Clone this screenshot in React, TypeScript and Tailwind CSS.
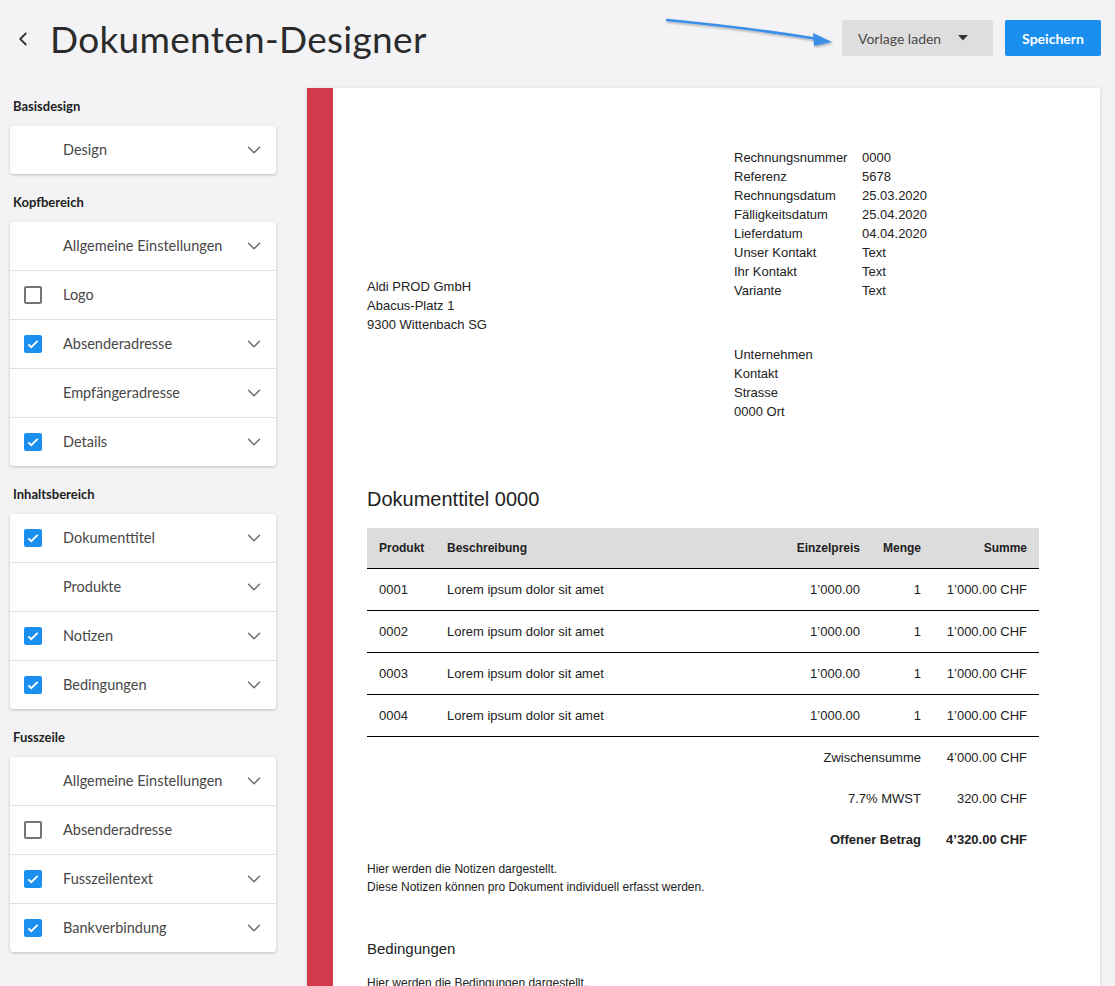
import React from "react";
import { ChevronDown, ChevronLeft } from "lucide-react";

type Row = { label: string; check?: boolean | null; chevron?: boolean };

const sections: { title: string; rows: Row[] }[] = [
  { title: "Basisdesign", rows: [{ label: "Design", check: null, chevron: true }] },
  {
    title: "Kopfbereich",
    rows: [
      { label: "Allgemeine Einstellungen", check: null, chevron: true },
      { label: "Logo", check: false, chevron: false },
      { label: "Absenderadresse", check: true, chevron: true },
      { label: "Empfängeradresse", check: null, chevron: true },
      { label: "Details", check: true, chevron: true },
    ],
  },
  {
    title: "Inhaltsbereich",
    rows: [
      { label: "Dokumenttitel", check: true, chevron: true },
      { label: "Produkte", check: null, chevron: true },
      { label: "Notizen", check: true, chevron: true },
      { label: "Bedingungen", check: true, chevron: true },
    ],
  },
  {
    title: "Fusszeile",
    rows: [
      { label: "Allgemeine Einstellungen", check: null, chevron: true },
      { label: "Absenderadresse", check: false, chevron: false },
      { label: "Fusszeilentext", check: true, chevron: true },
      { label: "Bankverbindung", check: true, chevron: true },
    ],
  },
];

const details = [
  ["Rechnungsnummer", "0000"],
  ["Referenz", "5678"],
  ["Rechnungsdatum", "25.03.2020"],
  ["Fälligkeitsdatum", "25.04.2020"],
  ["Lieferdatum", "04.04.2020"],
  ["Unser Kontakt", "Text"],
  ["Ihr Kontakt", "Text"],
  ["Variante", "Text"],
];

const products = ["0001", "0002", "0003", "0004"];

const Checkbox = ({ checked }: { checked: boolean }) =>
  checked ? (
    <div className="w-[18px] h-[18px] rounded-[2px] bg-[#1a8ff0] flex items-center justify-center">
      <svg width="14" height="14" viewBox="0 0 24 24" fill="none" stroke="white" strokeWidth="3.2">
        <path d="M4 12.5l5 5L20 6.5" />
      </svg>
    </div>
  ) : (
    <div className="w-[18px] h-[18px] rounded-[2px] border-2 border-[#747474] bg-white" />
  );

const SidebarCard = ({ rows }: { rows: Row[] }) => (
  <div className="bg-white rounded-[3px] shadow-[0_1px_3px_rgba(0,0,0,0.22)] divide-y divide-[#e0e0e0]">
    {rows.map((r, i) => (
      <div key={i} className="box-content h-[48px] flex items-center pl-[14px] pr-[11px]">
        <div className="w-[39px] shrink-0">{r.check !== null && r.check !== undefined && <Checkbox checked={r.check} />}</div>
        <span className="flex-1 text-[14.5px] text-[#474747]">{r.label}</span>
        {r.chevron && <ChevronDown size={22} strokeWidth={1.6} className="text-[#6b6b6b]" />}
      </div>
    ))}
  </div>
);

export default function App() {
  return (
    <div
      className="relative w-[1115px] h-[986px] overflow-hidden bg-[#f3f3f5]"
      style={{ fontFamily: "Lato, 'Noto Sans', sans-serif" }}
    >
      {/* header */}
      <div className="h-[78px] flex items-center pl-[12px] pr-[14px] pb-[2px]">
        <ChevronLeft size={22} strokeWidth={2} className="text-[#333] mt-[2px]" />
        <h1 className="ml-[16px] text-[37px] text-[#2b2b2b] tracking-[0.3px] leading-none">Dokumenten-Designer</h1>
        <div className="flex-1" />
        <button className="h-[36px] w-[151px] bg-[#dedede] rounded-[2px] flex items-center pl-[16px] text-[14px] text-[#4a4a4a]">
          Vorlage laden
          <svg className="ml-[17px]" width="10" height="6" viewBox="0 0 10 6">
            <path d="M0 0h10L5 5.5z" fill="#333" />
          </svg>
        </button>
        <button className="ml-[12px] h-[36px] w-[96px] bg-[#1a8ff0] rounded-[2px] text-white text-[14px] font-bold">
          Speichern
        </button>
      </div>

      {/* annotation arrow */}
      <svg className="absolute left-[660px] top-[12px]" width="180" height="40" viewBox="0 0 180 40">
        <defs>
          <filter id="sh" x="-10%" y="-50%" width="120%" height="200%">
            <feDropShadow dx="1" dy="1.5" stdDeviation="1" floodColor="#000" floodOpacity="0.3" />
          </filter>
        </defs>
        <g filter="url(#sh)">
          <path d="M7 8 Q 90 16 158 27" stroke="#3b8fe8" strokeWidth="2.5" fill="none" strokeLinecap="round" />
          <path d="M172 30 L153 21 L154 34 Z" fill="#3b8fe8" />
        </g>
      </svg>

      <div className="flex pl-[10px] pr-[15px]">
        {/* sidebar */}
        <div className="w-[266px] shrink-0">
          {sections.map((s) => (
            <div key={s.title}>
              <div className="pt-[20px] pb-[12px] pl-[3px] text-[13px] leading-[16px] font-bold text-[#222]">{s.title}</div>
              <SidebarCard rows={s.rows} />
            </div>
          ))}
        </div>

        {/* document */}
        <div
          className="ml-[31px] mt-[10px] flex-1 flex bg-white shadow-[0_1px_4px_rgba(0,0,0,0.15)] text-[#222]"
          style={{ fontFamily: "'Liberation Sans', Arial, sans-serif" }}
        >
          <div className="w-[26px] bg-[#d13a4b] shrink-0" />
          <div className="flex-1 pl-[34px] pr-[61px] pt-[60px]">
            <div className="flex text-[13px] leading-[19px]">
              <div className="w-[367px] pt-[129px]">
                <div>Aldi PROD GmbH</div>
                <div>Abacus-Platz 1</div>
                <div>9300 Wittenbach SG</div>
              </div>
              <div>
                {details.map(([k, v]) => (
                  <div key={k} className="flex">
                    <span className="w-[128px]">{k}</span>
                    <span>{v}</span>
                  </div>
                ))}
                <div className="mt-[45px]">
                  <div>Unternehmen</div>
                  <div>Kontakt</div>
                  <div>Strasse</div>
                  <div>0000 Ort</div>
                </div>
              </div>
            </div>

            <div className="mt-[64px] text-[20px] leading-[28px]">Dokumenttitel 0000</div>

            <div className="mt-[15px] text-[13px]">
              <div className="grid grid-cols-[68px_1fr_90px_61px_106px] h-[41px] items-center bg-[#dcdcdc] border-b border-black text-[12px] font-bold">
                <span className="pl-[12px]">Produkt</span>
                <span className="pl-[12px]">Beschreibung</span>
                <span className="text-right pr-[12px]">Einzelpreis</span>
                <span className="text-right pr-[12px]">Menge</span>
                <span className="text-right pr-[12px]">Summe</span>
              </div>
              {products.map((p) => (
                <div key={p} className="grid grid-cols-[68px_1fr_90px_61px_106px] h-[42px] items-center border-b border-black">
                  <span className="pl-[12px]">{p}</span>
                  <span className="pl-[12px]">Lorem ipsum dolor sit amet</span>
                  <span className="text-right pr-[12px]">1’000.00</span>
                  <span className="text-right pr-[12px]">1</span>
                  <span className="text-right pr-[12px]">1’000.00 CHF</span>
                </div>
              ))}
              {[
                ["Zwischensumme", "4’000.00 CHF", false],
                ["7.7% MWST", "320.00 CHF", false],
                ["Offener Betrag", "4’320.00 CHF", true],
              ].map(([k, v, b]) => (
                <div key={k as string} className={`grid grid-cols-[1fr_106px] h-[41px] items-center ${b ? "font-bold" : ""}`}>
                  <span className="text-right pr-[12px]">{k}</span>
                  <span className="text-right pr-[12px]">{v}</span>
                </div>
              ))}
            </div>

            <div className="text-[12px] leading-[18px]">
              <div>Hier werden die Notizen dargestellt.</div>
              <div>Diese Notizen können pro Dokument individuell erfasst werden.</div>
            </div>

            <div className="mt-[42px] text-[15px] leading-[22px]">Bedingungen</div>
            <div className="mt-[14px] text-[12px] leading-[18px]">Hier werden die Bedingungen dargestellt.</div>
            <div className="h-[200px]" />
          </div>
        </div>
      </div>
    </div>
  );
}
